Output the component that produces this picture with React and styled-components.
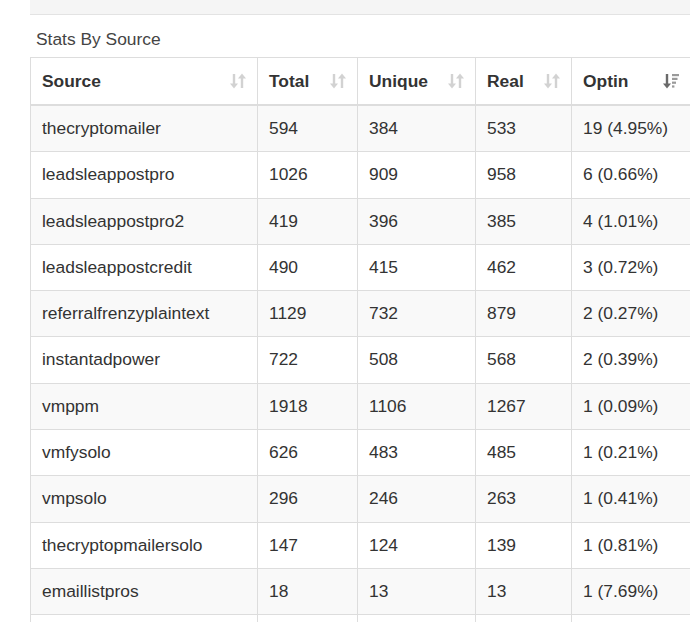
import React from 'react';
import styled, { createGlobalStyle } from 'styled-components';

const GlobalStyle = createGlobalStyle`
  body {
    margin: 0;
    background: #fff;
    font-family: "Liberation Sans", Arial, sans-serif;
    color: #333;
  }
`;

const Page = styled.div`
  padding-left: 30px;
  width: 660px;
`;

const TopPanel = styled.div`
  height: 14px;
  background: #f5f5f5;
  border-bottom: 1px solid #e3e3e3;
`;

const Caption = styled.div`
  padding: 13px 6px 7px;
  font-size: 17.4px;
  line-height: 22px;
  color: #444;
`;

const Table = styled.table`
  width: 660px;
  border-collapse: collapse;
  table-layout: fixed;
  border: 1px solid #ddd;
  font-size: 17.4px;
`;

const Th = styled.th`
  box-sizing: border-box;
  width: ${({ $w }) => $w}px;
  padding: 12px 10px 12px 11px;
  line-height: 22px;
  text-align: left;
  font-weight: bold;
  color: #333;
  border: 1px solid #ddd;
  border-bottom: 2px solid #ddd;
`;

const HeadInner = styled.div`
  display: flex;
  align-items: center;
  justify-content: space-between;
`;

const Row = styled.tr`
  background: ${({ $striped }) => ($striped ? '#f9f9f9' : '#fff')};
`;

const Td = styled.td`
  padding: 12px 11px;
  line-height: 21.3px;
  color: #333;
  border: 1px solid #ddd;
  white-space: nowrap;
  overflow: hidden;
`;

const SortBoth = () => (
  <svg width="18" height="18" viewBox="0 0 18 18">
    <g fill="#d2d2d2">
      <rect x="3.8" y="2" width="2.4" height="11" />
      <polygon points="1,11.5 9,11.5 5,16.5" />
      <rect x="11.8" y="5" width="2.4" height="11" />
      <polygon points="9,6.5 17,6.5 13,1.5" />
    </g>
  </svg>
);

const SortDesc = () => (
  <svg width="18" height="18" viewBox="0 0 18 18">
    <g fill="#6a6a6a">
      <rect x="3.8" y="2" width="2.4" height="11" />
      <polygon points="1,11.5 9,11.5 5,16.5" />
    </g>
    <g fill="#9a9a9a">
      <rect x="10" y="2" width="7" height="2.2" />
      <rect x="10" y="5.8" width="5.5" height="2.2" />
      <rect x="10" y="9.6" width="4" height="2.2" />
      <rect x="10" y="13.4" width="2.4" height="2.2" />
    </g>
  </svg>
);

const columns = [
  { label: 'Source', width: 227 },
  { label: 'Total', width: 100 },
  { label: 'Unique', width: 118 },
  { label: 'Real', width: 96 },
  { label: 'Optin', width: 119, active: true },
];

const rows = [
  ['thecryptomailer', '594', '384', '533', '19 (4.95%)'],
  ['leadsleappostpro', '1026', '909', '958', '6 (0.66%)'],
  ['leadsleappostpro2', '419', '396', '385', '4 (1.01%)'],
  ['leadsleappostcredit', '490', '415', '462', '3 (0.72%)'],
  ['referralfrenzyplaintext', '1129', '732', '879', '2 (0.27%)'],
  ['instantadpower', '722', '508', '568', '2 (0.39%)'],
  ['vmppm', '1918', '1106', '1267', '1 (0.09%)'],
  ['vmfysolo', '626', '483', '485', '1 (0.21%)'],
  ['vmpsolo', '296', '246', '263', '1 (0.41%)'],
  ['thecryptopmailersolo', '147', '124', '139', '1 (0.81%)'],
  ['emaillistpros', '18', '13', '13', '1 (7.69%)'],
  ['leadsleapsolo', '52', '40', '44', '1 (2.50%)'],
];

const App = () => (
  <Page>
    <GlobalStyle />
    <TopPanel />
    <Caption>Stats By Source</Caption>
    <Table>
      <thead>
        <tr>
          {columns.map((c) => (
            <Th key={c.label} $w={c.width}>
              <HeadInner>
                {c.label}
                {c.active ? <SortDesc /> : <SortBoth />}
              </HeadInner>
            </Th>
          ))}
        </tr>
      </thead>
      <tbody>
        {rows.map((r, i) => (
          <Row key={r[0]} $striped={i % 2 === 0}>
            {r.map((cell, j) => (
              <Td key={j}>{cell}</Td>
            ))}
          </Row>
        ))}
      </tbody>
    </Table>
  </Page>
);

export default App;
